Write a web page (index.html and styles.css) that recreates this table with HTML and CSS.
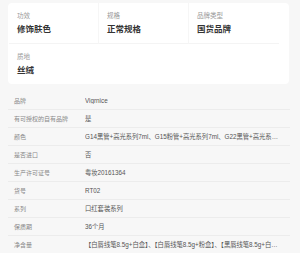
FILE: index.html
```
<!DOCTYPE html>
<html>
<head>
    <title>商品参数</title>
    <link rel="stylesheet" href="styles.css">
</head>
<body>
    <div class="core-card">
        <div class="core-item">
            <div class="core-label">功效</div>
            <div class="core-value">修饰肤色</div>
        </div>
        <div class="core-item">
            <div class="core-label">规格</div>
            <div class="core-value">正常规格</div>
        </div>
        <div class="core-item">
            <div class="core-label">品牌类型</div>
            <div class="core-value">国货品牌</div>
        </div>
        <div class="core-item last-row">
            <div class="core-label">质地</div>
            <div class="core-value">丝绒</div>
        </div>
    </div>

    <div class="param-table">
        <div class="param-row"><span class="param-label">品牌</span><span class="param-value">Vigrnice</span></div>
        <div class="param-row"><span class="param-label">有可授权的自有品牌</span><span class="param-value">是</span></div>
        <div class="param-row"><span class="param-label">颜色</span><span class="param-value">G14黑管+高光系列7ml、G15粉管+高光系列7ml、G22黑管+高光系列7ml</span></div>
        <div class="param-row"><span class="param-label">是否进口</span><span class="param-value">否</span></div>
        <div class="param-row"><span class="param-label">生产许可证号</span><span class="param-value">粤妆20161364</span></div>
        <div class="param-row"><span class="param-label">货号</span><span class="param-value">RT02</span></div>
        <div class="param-row"><span class="param-label">系列</span><span class="param-value">口红套装系列</span></div>
        <div class="param-row"><span class="param-label">保质期</span><span class="param-value">36个月</span></div>
        <div class="param-row"><span class="param-label">净含量</span><span class="param-value">【白唇线笔8.5g+白盒】、【白唇线笔8.5g+粉盒】、【黑唇线笔8.5g+白盒】</span></div>
    </div>
</body>
</html>
```

FILE: styles.css
```
body {
    margin: 0;
    background-color: #f7f7f7;
    font-family: "Liberation Sans", "Noto Sans CJK SC", sans-serif;
}
.core-card {
    margin: 3px 11px 0 8px;
    padding: 0 10px 0 1px;
    background-color: #fff;
    border-radius: 4px;
    display: grid;
    grid-template-columns: 90px 90px 90px;
}
.core-item {
    padding: 8px;
    border-bottom: 1px solid #f4f4f4;
    border-right: 1px solid #f6f6f6;
}
.core-item:nth-child(3) {
    border-right: none;
}
.core-item.last-row {
    border-bottom: none;
    border-right: none;
}
.core-label {
    font-size: 6.5px;
    line-height: 10px;
    color: #999;
    margin-bottom: 2px;
}
.core-value {
    font-size: 8.5px;
    line-height: 12px;
    font-weight: bold;
    color: #333;
}
.param-table {
    margin: 8px 10px 0 8px;
}
.param-row {
    display: flex;
    height: 17px;
    align-items: center;
    border-bottom: 1px solid #ececec;
    font-size: 6px;
}
.param-row:last-child {
    border-bottom: none;
}
.param-label {
    width: 71px;
    padding-left: 6px;
    flex-shrink: 0;
    color: #888;
}
.param-value {
    flex: 1;
    min-width: 0;
    padding-right: 10px;
    font-size: 6.3px;
    color: #555;
    white-space: nowrap;
    overflow: hidden;
    text-overflow: ellipsis;
}
```
